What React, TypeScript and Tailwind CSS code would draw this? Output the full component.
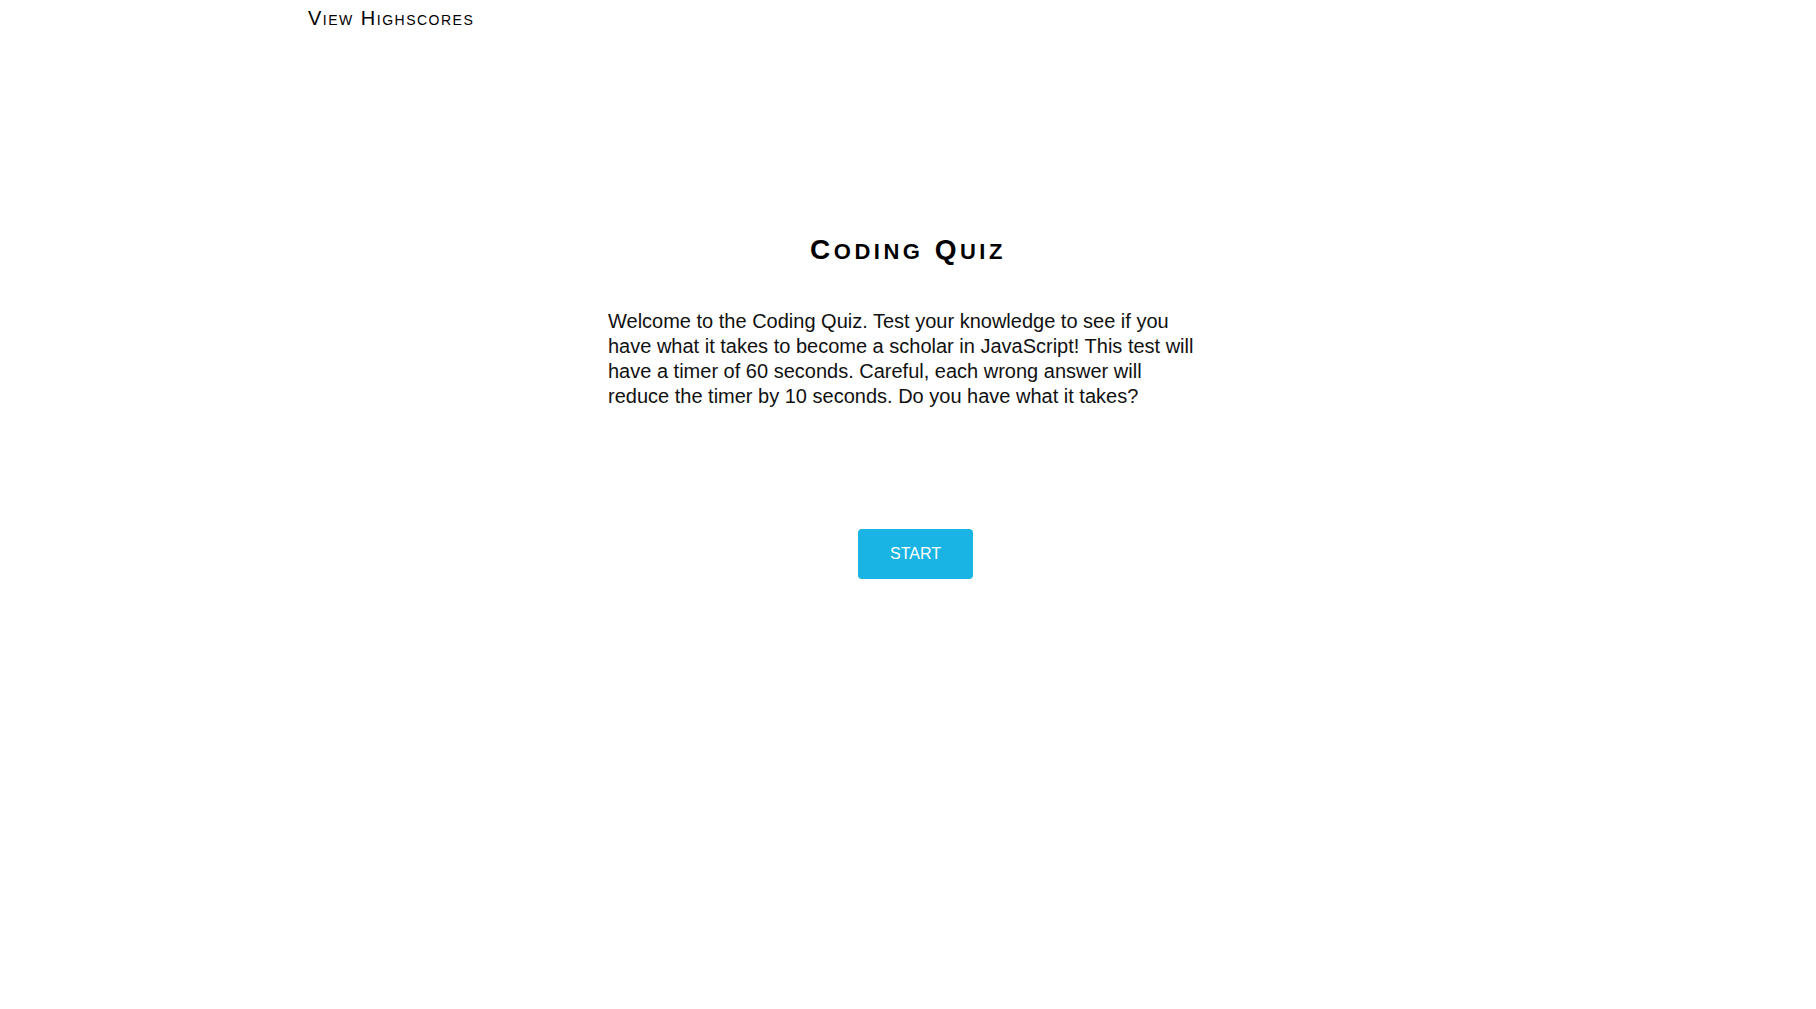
import React from "react";

function App() {
  return (
    <div className="min-h-screen bg-white text-black font-['Liberation_Sans',Arial,sans-serif]">
      {/* Header */}
      <header className="w-[1200px] mx-auto pt-[7px]">
        <a className="text-[20px] leading-[23px] tracking-[1.5px] [font-variant:small-caps] cursor-pointer">
          View Highscores
        </a>
      </header>

      {/* Intro */}
      <main className="w-[1200px] mx-auto flex flex-col items-center">
        <h1 className="mt-[202px] text-[28px] leading-[32px] font-bold tracking-[3.5px]">
          C<span className="text-[22px] leading-none uppercase">oding</span> Q
          <span className="text-[22px] leading-none uppercase">uiz</span>
        </h1>
        <p className="mt-[43px] w-[600px] text-[20px] leading-[25px] text-[#111]">
          Welcome to the Coding Quiz. Test your knowledge to see if you have
          what it takes to become a scholar in JavaScript! This test will have
          a timer of 60 seconds. Careful, each wrong answer will reduce the
          timer by 10 seconds. Do you have what it takes?
        </p>
        <div className="mt-[120px] flex justify-center pl-[15px]">
          <button className="w-[115px] h-[50px] rounded-[4px] bg-[#1ab4e4] text-white text-[16px]">
            START
          </button>
        </div>
      </main>
    </div>
  );
}

export default App;
